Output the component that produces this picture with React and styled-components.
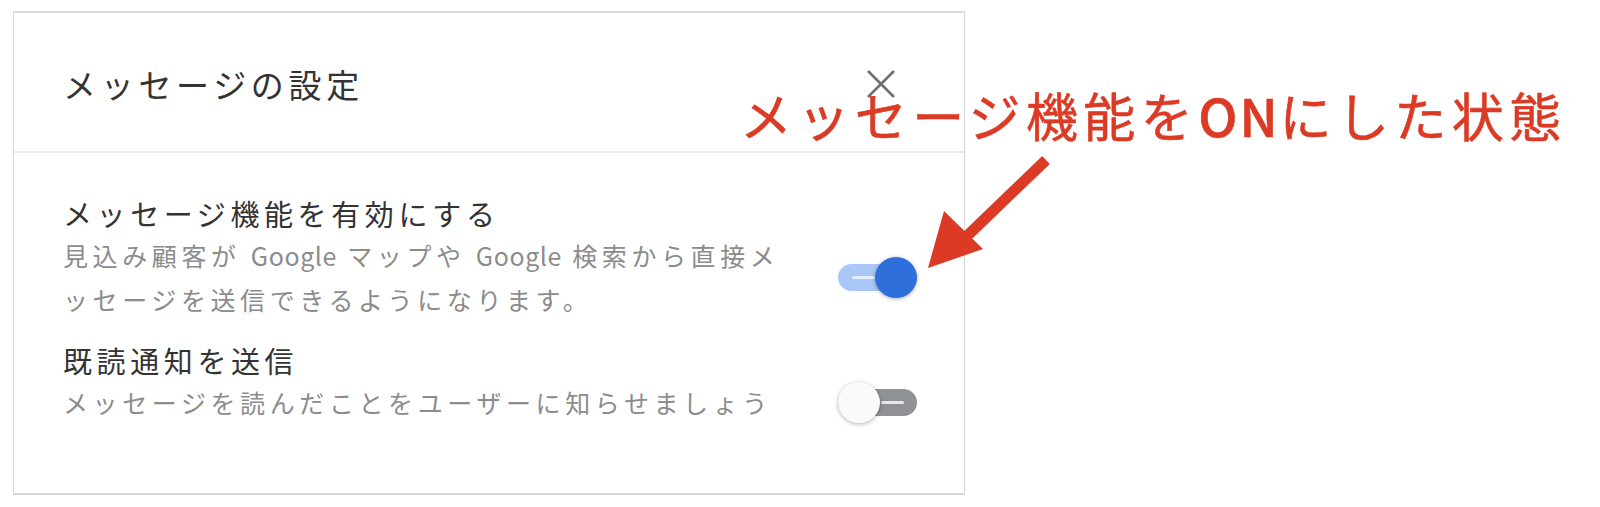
import React from "react";
import styled, { createGlobalStyle } from "styled-components";

const GlobalStyle = createGlobalStyle`
  body {
    margin: 0;
    background: #ffffff;
    font-family: "Noto Sans CJK JP", "Noto Sans", sans-serif;
  }
`;

const Page = styled.div`
  position: relative;
  width: 1600px;
  height: 507px;
  padding: 11px 0 0 13px;
  box-sizing: border-box;
  overflow: hidden;
`;

const Card = styled.div`
  width: 952px;
  height: 484px;
  box-sizing: border-box;
  border: 1px solid #d6d6d6;
  border-top: 2px solid #dcdcdc;
  border-bottom: 2px solid #d4d4d4;
  background: #fff;
  display: flex;
  flex-direction: column;
`;

const Header = styled.div`
  height: 140px;
  box-sizing: border-box;
  display: flex;
  align-items: center;
  justify-content: space-between;
  padding: 4px 68px 0 49px;
  border-bottom: 2px solid #ececec;
`;

const Title = styled.h1`
  margin: 0;
  font-size: 33px;
  font-weight: 400;
  letter-spacing: 4.7px;
  color: #333;
`;

const CloseButton = styled.button`
  border: none;
  background: none;
  padding: 0;
  width: 30px;
  height: 30px;
  display: flex;
  align-items: center;
  justify-content: center;
  cursor: pointer;
`;

const Body = styled.div`
  padding: 40px 47px 0 49px;
  display: flex;
  flex-direction: column;
  gap: 19px;
`;

const Setting = styled.div`
  display: flex;
  flex-direction: column;
`;

const SettingTitle = styled.div`
  font-size: 29px;
  line-height: 40px;
  letter-spacing: 4.6px;
  color: #333;
`;

const DescRow = styled.div`
  display: flex;
  align-items: center;
  justify-content: space-between;
`;

const Desc = styled.div`
  font-size: 25px;
  line-height: 44px;
  letter-spacing: 4.6px;
  color: #8c8c8c;
  white-space: pre-line;
`;

const Latin = styled.span`
  letter-spacing: 0.6px;
`;

const Track = styled.div`
  position: relative;
  flex: none;
  width: 79px;
  height: 27px;
  border-radius: 14px;
  background: ${(p) => (p.on ? "#a9c8f7" : "#8e9297")};
`;

const Dash = styled.span`
  position: absolute;
  top: 12px;
  left: ${(p) => (p.on ? "14px" : "43px")};
  width: 23px;
  height: 3px;
  border-radius: 2px;
  background: ${(p) => (p.on ? "#e4eefd" : "#e6e6e6")};
`;

const Knob = styled.span`
  position: absolute;
  top: -7px;
  left: ${(p) => (p.on ? "37px" : "0px")};
  width: 42px;
  height: 41px;
  border-radius: 50%;
  background: ${(p) => (p.on ? "#2f6fdc" : "#fafafa")};
  box-shadow: 0 1px 4px rgba(0, 0, 0, 0.3);
`;

const Annotation = styled.div`
  position: absolute;
  left: 740px;
  top: 89px;
  font-size: 52px;
  line-height: 52px;
  font-weight: 400;
  letter-spacing: 5.4px;
  color: #db3a25;
  white-space: nowrap;
  -webkit-text-stroke: 0.6px #db3a25;
`;

const Strong = styled.span`
  font-weight: 500;
  letter-spacing: 2px;
`;

const Arrow = styled.svg`
  position: absolute;
  left: 900px;
  top: 140px;
`;

const Toggle = ({ on }) => (
  <Track on={on ? 1 : 0}>
    <Dash on={on ? 1 : 0} />
    <Knob on={on ? 1 : 0} />
  </Track>
);

const CloseIcon = () => (
  <svg width="30" height="30" viewBox="0 0 30 30">
    <path d="M2 2 L28 28 M28 2 L2 28" stroke="#6f6f6f" strokeWidth="2.6" fill="none" />
  </svg>
);

const App = () => {
  return (
    <>
      <GlobalStyle />
      <Page>
        <Card>
          <Header>
            <Title>メッセージの設定</Title>
            <CloseButton aria-label="閉じる">
              <CloseIcon />
            </CloseButton>
          </Header>
          <Body>
            <Setting>
              <SettingTitle>メッセージ機能を有効にする</SettingTitle>
              <DescRow>
                <Desc>
                  見込み顧客が <Latin>Google</Latin> マップや <Latin>Google</Latin> 検索から直接メ
                  {"\n"}ッセージを送信できるようになります。
                </Desc>
                <Toggle on />
              </DescRow>
            </Setting>
            <Setting>
              <SettingTitle>既読通知を送信</SettingTitle>
              <DescRow>
                <Desc>メッセージを読んだことをユーザーに知らせましょう</Desc>
                <Toggle />
              </DescRow>
            </Setting>
          </Body>
        </Card>
        <Annotation>
          メッセージ機能を<Strong>ON</Strong>にした状態
        </Annotation>
        <Arrow width="160" height="140" viewBox="900 140 160 140">
          <path d="M1046 160 L965 238" stroke="#db3a25" strokeWidth="11" fill="none" />
          <polygon points="928,268 944,211 983,249" fill="#db3a25" />
        </Arrow>
      </Page>
    </>
  );
};

export default App;
